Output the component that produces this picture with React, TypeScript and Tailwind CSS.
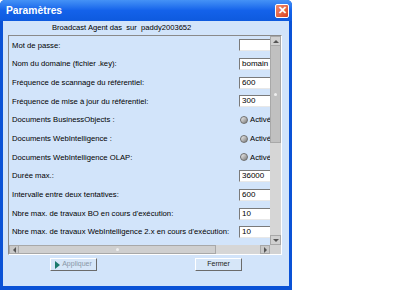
const rows: { label: string; kind: "input" | "radio"; value?: string }[] = [
  { label: "Mot de passe:", kind: "input", value: "" },
  { label: "Nom du domaine (fichier .key):", kind: "input", value: "bomain" },
  { label: "Fréquence de scannage du référentiel:", kind: "input", value: "600" },
  { label: "Fréquence de mise à jour du référentiel:", kind: "input", value: "300" },
  { label: "Documents BusinessObjects :", kind: "radio" },
  { label: "Documents WebIntelligence :", kind: "radio" },
  { label: "Documents WebIntelligence OLAP:", kind: "radio" },
  { label: "Durée max.:", kind: "input", value: "36000" },
  { label: "Intervalle entre deux tentatives:", kind: "input", value: "600" },
  { label: "Nbre max. de travaux BO en cours d'exécution:", kind: "input", value: "10" },
  { label: "Nbre max. de travaux WebIntelligence 2.x en cours d'exécution:", kind: "input", value: "10" },
]

const Row = ({ label, kind, value }: { label: string; kind: "input" | "radio"; value?: string }) => (
  <div className="flex h-[18.7px] shrink-0 items-center">
    <div className="w-[230px] shrink-0 overflow-visible whitespace-nowrap pl-[3px]">{label}</div>
    {kind === "input" ? (
      <div className="flex h-[12px] w-[50px] shrink-0 items-center border-t border-l border-t-[#7a7a7a] border-l-[#7a7a7a] border-b border-r border-b-[#e8e8e8] border-r-[#e8e8e8] bg-white pl-[2px] text-[8px]">
        {value}
      </div>
    ) : (
      <div className="flex shrink-0 items-center gap-[2px] pl-[1px]">
        <div className="h-[8px] w-[8px] rounded-full border border-[#6e6e6e] bg-gradient-to-br from-[#f4f4f4] to-[#7c7c7c]" />
        <span>Activé</span>
      </div>
    )}
  </div>
)

const Btn = ({ label, disabled }: { label: string; disabled?: boolean }) => (
  <div className="flex h-[13px] w-[47px] items-center justify-center gap-[2px] border-t border-l border-t-white border-l-white border-b border-r border-b-[#6b6b6b] border-r-[#6b6b6b] bg-[#d6e6f8] text-[7px]">
    {disabled && <span className="h-0 w-0 border-y-[4px] border-l-[5px] border-y-transparent border-l-[#1c7a6c]" />}
    <span className={disabled ? "text-[#8896a6]" : "text-[#222]"}>{label}</span>
  </div>
)

export default function App() {
  return (
    <div className="flex h-[290px] w-[400px] bg-white font-['Liberation_Sans',Arial,sans-serif] text-black">
      <div className="flex h-full w-[292px] flex-col rounded-t-[5px] bg-[#0a52d6]">
        {/* title bar */}
        <div className="flex h-[21px] shrink-0 items-center justify-between rounded-t-[5px] bg-gradient-to-b from-[#4592f6] via-[#1462ea] to-[#0e5ade] pl-[6px] pr-[3px]">
          <span className="text-[10.3px] font-bold text-white">Paramètres</span>
          <div className="flex h-[14px] w-[14px] items-center justify-center rounded-[2px] border border-white bg-gradient-to-br from-[#f08a6c] to-[#d6401c] text-[11px] font-bold leading-none text-white">
            ✕
          </div>
        </div>
        {/* body */}
        <div className="mx-[3px] mb-[4px] flex flex-1 flex-col bg-[#d2e4fa] text-[7.7px]">
          <div className="flex h-[14px] shrink-0 items-center pl-[49px] text-[7.6px]">
            Broadcast Agent das&nbsp; sur&nbsp; paddy2003652
          </div>
          <div className="ml-[5px] mr-[7px] flex h-[220px] shrink-0 flex-col border-t border-l border-t-[#8a8a8a] border-l-[#8a8a8a] border-b border-r border-b-white border-r-white">
            <div className="flex min-h-0 flex-1">
              <div className="flex flex-1 flex-col overflow-hidden">
                {rows.map((r) => (
                  <Row key={r.label} {...r} />
                ))}
              </div>
              {/* vertical scrollbar */}
              <div className="flex w-[11px] shrink-0 flex-col bg-[#d2d2d2]">
                <div className="flex h-[10px] items-center justify-center border border-[#a8a8a8] bg-[#d0d0d0]">
                  <span className="h-0 w-0 border-x-[3px] border-b-[3px] border-x-transparent border-b-[#555]" />
                </div>
                <div className="flex h-[97px] items-center justify-center border-x border-b border-[#a8a8a8] bg-[#c0c0c0]">
                  <span className="h-[3px] w-[3px] rounded-full bg-[#eee]" />
                </div>
                <div className="flex-1 bg-[#d6d6d6]" />
                <div className="flex h-[10px] items-center justify-center border border-[#a8a8a8] bg-[#d0d0d0]">
                  <span className="h-0 w-0 border-x-[3px] border-t-[3px] border-x-transparent border-t-[#555]" />
                </div>
              </div>
            </div>
            {/* horizontal scrollbar */}
            <div className="flex h-[9px] shrink-0">
              <div className="flex flex-1 bg-[#d6d6d6]">
                <div className="flex w-[10px] items-center justify-center border border-[#a8a8a8] bg-[#c8c8c8]">
                  <span className="h-0 w-0 border-y-[3px] border-r-[3px] border-y-transparent border-r-[#555]" />
                </div>
                <div className="flex w-[197px] items-center justify-center border-y border-r border-[#a8a8a8] bg-[#cfcfcf]">
                  <span className="h-[3px] w-[3px] rounded-full bg-[#eee]" />
                </div>
                <div className="flex-1" />
                <div className="flex w-[10px] items-center justify-center border border-[#a8a8a8] bg-[#c8c8c8]">
                  <span className="h-0 w-0 border-y-[3px] border-l-[3px] border-y-transparent border-l-[#555]" />
                </div>
              </div>
              <div className="w-[11px] bg-[#d2d2d2]" />
            </div>
          </div>
          {/* buttons */}
          <div className="flex shrink-0 pt-[3px] pl-[47px]">
            <Btn label="Appliquer" disabled />
            <div className="w-[98px]" />
            <Btn label="Fermer" />
          </div>
        </div>
      </div>
    </div>
  )
}
